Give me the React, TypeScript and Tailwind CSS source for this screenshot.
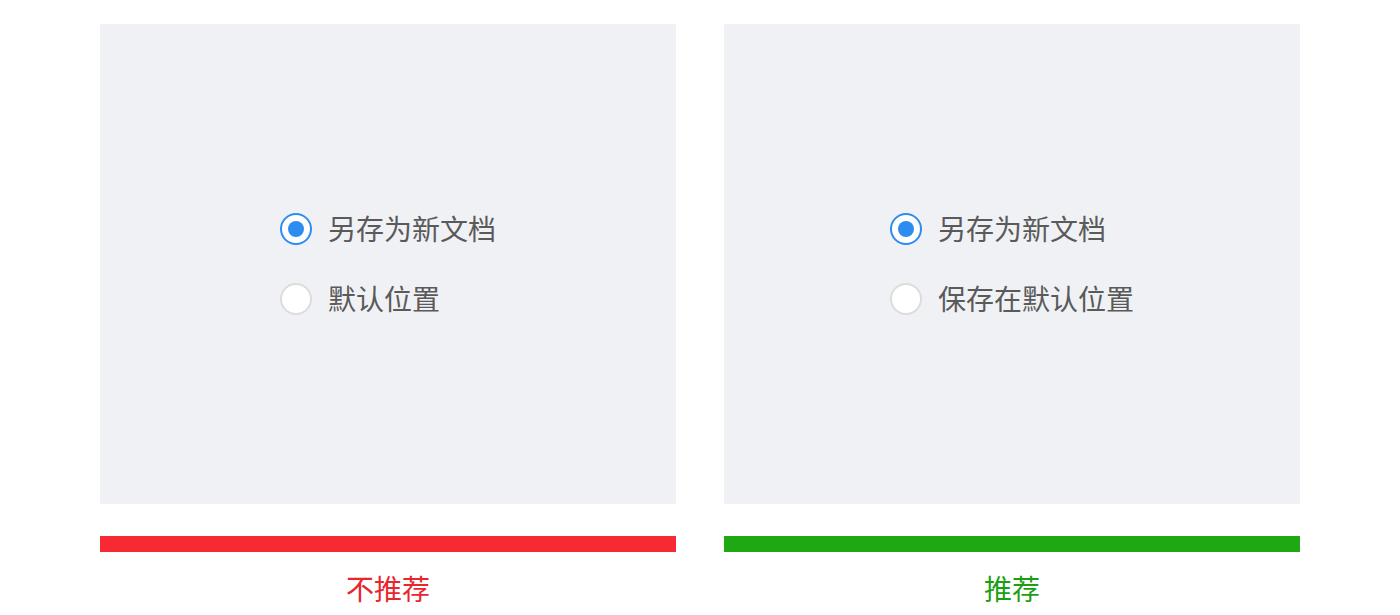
const FONT = "font-['Noto_Sans_CJK_SC','Noto_Sans',sans-serif]"

type Option = { label: string; checked?: boolean }

const CASES: { options: Option[]; verdict: string; bar: string; text: string }[] = [
  {
    options: [{ label: "另存为新文档", checked: true }, { label: "默认位置" }],
    verdict: "不推荐",
    bar: "bg-[#f72a31]",
    text: "text-[#e8262d]",
  },
  {
    options: [{ label: "另存为新文档", checked: true }, { label: "保存在默认位置" }],
    verdict: "推荐",
    bar: "bg-[#1ea812]",
    text: "text-[#1c9f12]",
  },
]

function Radio({ checked }: { checked?: boolean }) {
  if (checked) {
    return (
      <span className="w-8 h-8 rounded-full border-2 border-[#2d8cf0] bg-white flex items-center justify-center shrink-0">
        <span className="w-4 h-4 rounded-full bg-[#2d8cf0]" />
      </span>
    )
  }
  return <span className="w-8 h-8 rounded-full border-2 border-[#dcdcdc] bg-white shrink-0" />
}

export default function App() {
  return (
    <div className={`w-[1400px] h-[615px] bg-white flex justify-center gap-12 pt-6 ${FONT}`}>
      {CASES.map((c, i) => (
        <div key={i} className="w-[576px] flex flex-col">
          {/* Preview panel */}
          <div className="h-[480px] bg-[#f0f1f5] flex items-center justify-center">
            <div className="flex flex-col gap-[38px]">
              {c.options.map((o) => (
                <div key={o.label} className="flex items-center gap-4 h-8">
                  <Radio checked={o.checked} />
                  <span className="text-[28px] leading-8 text-[#5a5a5a] -mt-[2px]">{o.label}</span>
                </div>
              ))}
            </div>
          </div>

          {/* Verdict */}
          <div className={`h-4 mt-8 ${c.bar}`} />
          <div className={`text-center text-[28px] leading-9 mt-[18px] ${c.text}`}>{c.verdict}</div>
        </div>
      ))}
    </div>
  )
}
